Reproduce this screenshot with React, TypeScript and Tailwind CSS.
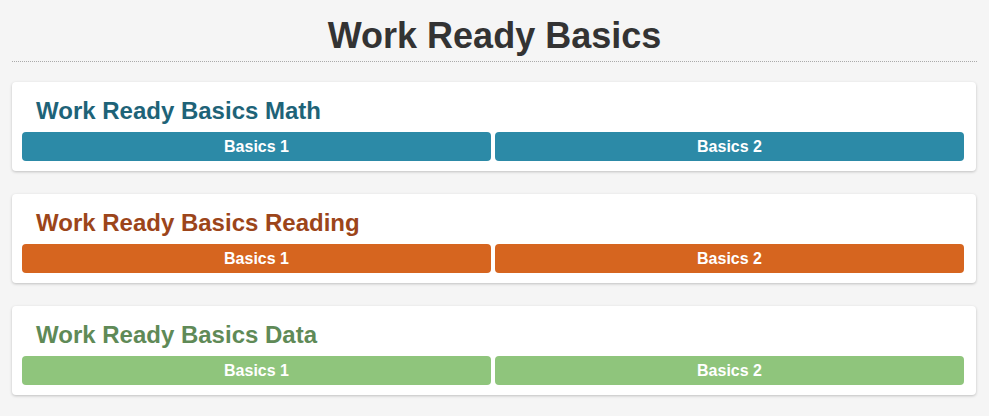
import React from 'react';

interface Section {
  title: string;
  heading: string;
  button: string;
}

const sections: Section[] = [
  { title: 'Work Ready Basics Math', heading: 'text-[#1e6378]', button: 'bg-[#2c8aa7]' },
  { title: 'Work Ready Basics Reading', heading: 'text-[#9c451a]', button: 'bg-[#d6651f]' },
  { title: 'Work Ready Basics Data', heading: 'text-[#5f8a57]', button: 'bg-[#8fc57c]' },
];

const SectionCard: React.FC<{ s: Section }> = ({ s }) => (
  <div className="bg-white rounded-[4px] shadow-[0_1px_3px_rgba(0,0,0,0.22)] pt-[16px] pb-[10px] pl-[10px] pr-[12px]">
    <h2 className={`text-[24px] leading-[26px] font-bold pl-[14px] mb-[8px] ${s.heading}`}>{s.title}</h2>
    <div className="flex gap-[4px]">
      {['Basics 1', 'Basics 2'].map(label => (
        <button
          key={label}
          className={`flex-1 h-[29px] rounded-[4px] text-white font-bold text-[16px] leading-[29px] ${s.button}`}
        >
          {label}
        </button>
      ))}
    </div>
  </div>
);

export default function App() {
  return (
    <div className="min-h-screen bg-[#f5f5f5] px-[12px] pb-[20px] font-['Liberation_Sans',Arial,sans-serif]">
      <div className="pt-[16px] pb-[5px] border-b border-dotted border-[#aaaaaa]">
        <h1 className="text-center text-[36px] leading-[40px] font-bold text-[#333333]">Work Ready Basics</h1>
      </div>
      <div className="mt-[20px] flex flex-col gap-[23px] mr-[1px]">
        {sections.map(s => (
          <SectionCard key={s.title} s={s} />
        ))}
      </div>
    </div>
  );
}
